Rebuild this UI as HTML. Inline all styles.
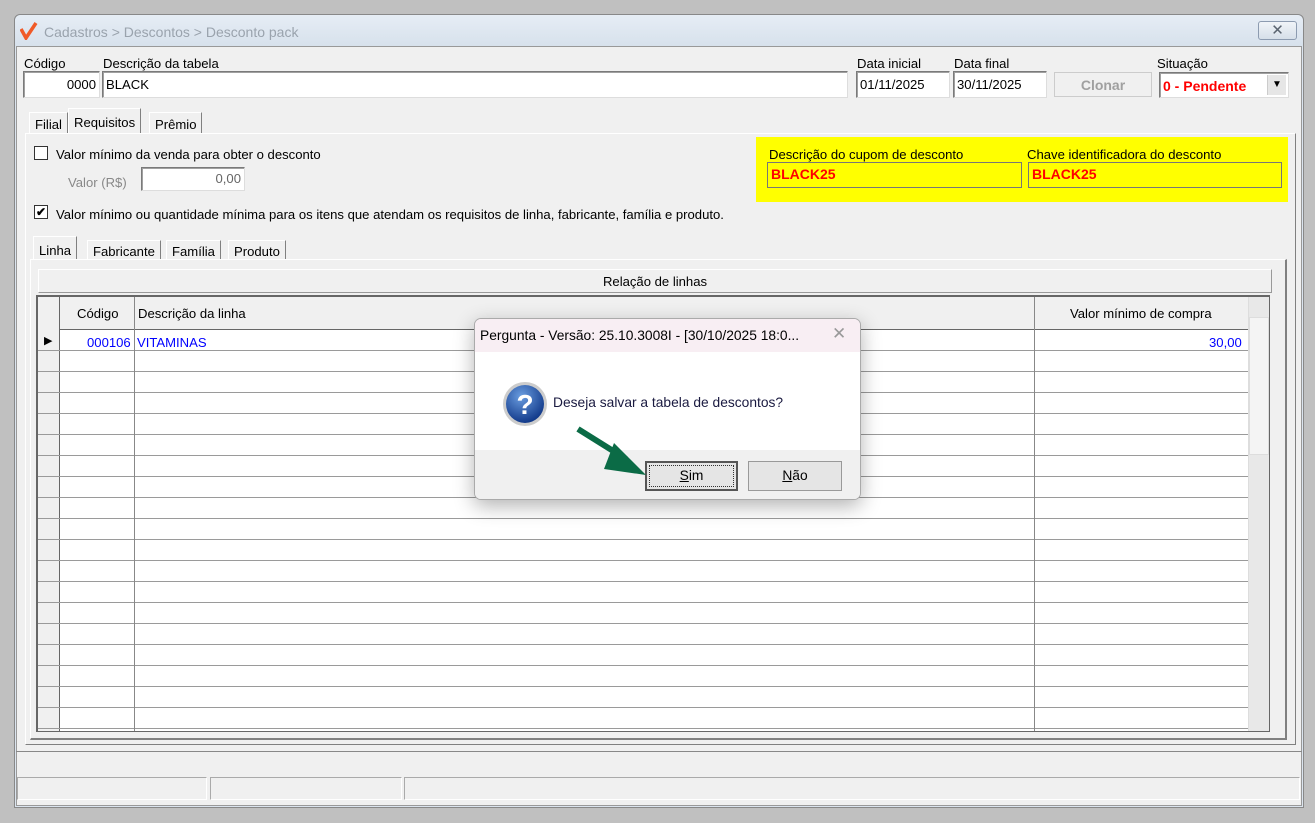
<!DOCTYPE html>
<html><head><meta charset="utf-8"><style>
*{box-sizing:border-box;margin:0;padding:0}
body{width:1315px;height:823px;background:#c0c0c0;position:relative;overflow:hidden;font-family:"Liberation Sans",sans-serif;font-size:13.1px;color:#000}
.a{position:absolute}
.inp{position:absolute;background:#fff;border:1px solid #7a7a7a;border-right-color:#ddd;border-bottom-color:#ddd;box-shadow:inset 1px 1px 0 #a0a0a0;padding:2px 3px;white-space:nowrap;overflow:hidden}
.tab{position:absolute;border:1px solid #fff;border-right:1px solid #808080;border-bottom:none;padding:4px 5px;background:#f0f0f0}
.btn{position:absolute;border:1px solid #adadad;background:#e1e1e1;text-align:center}
</style></head><body>
<div class="a" style="left:14px;top:14px;width:1290px;height:794px;background:#dbe4ee;border:1px solid #888;border-radius:6px 6px 0 0"></div>
<div class="a" style="left:15px;top:15px;width:1288px;height:31px;background:linear-gradient(#e6edf5,#d7e1ec);border-radius:6px 6px 0 0"></div>
<svg class="a" style="left:20px;top:22px" width="18" height="18" viewBox="0 0 18 18"><path d="M1 7 L6 16 L16 1" stroke="#f05a28" stroke-width="3.5" fill="none"/></svg>
<div class="a" style="left:44px;top:24px;font-size:14px;color:#9aa3ad">Cadastros &gt; Descontos &gt; Desconto pack</div>
<div class="a" style="left:1258px;top:21px;width:39px;height:19px;border:1px solid #8c9bb0;border-radius:3px;background:linear-gradient(#f0f4f8,#d6dfe9);text-align:center;font-size:15px;color:#5a6470;line-height:17px">✕</div>
<div class="a" style="left:16px;top:46px;width:1286px;height:760px;background:#f0f0f0;border:1px solid #999"></div>

<div class="a" style="left:24px;top:56px">Código</div>
<div class="a" style="left:103px;top:56px">Descrição da tabela</div>
<div class="inp" style="left:23px;top:71px;width:77px;height:27px;text-align:right;padding-top:5px">0000</div>
<div class="inp" style="left:102px;top:71px;width:746px;height:27px;padding-top:5px">BLACK</div>
<div class="a" style="left:857px;top:56px">Data inicial</div>
<div class="a" style="left:954px;top:56px">Data final</div>
<div class="inp" style="left:856px;top:71px;width:94px;height:27px;padding-top:5px">01/11/2025</div>
<div class="inp" style="left:953px;top:71px;width:94px;height:27px;padding-top:5px">30/11/2025</div>
<div class="btn" style="left:1054px;top:72px;width:98px;height:25px;color:#a0a0a0;background:#f0f0f0;border-color:#ccc;font-size:14px;line-height:25px;font-weight:bold">Clonar</div>
<div class="a" style="left:1157px;top:56px">Situação</div>
<div class="inp" style="left:1159px;top:72px;width:130px;height:26px;color:#f00;font-weight:bold;font-size:14px;padding-top:5px">0 - Pendente</div>
<div class="a" style="left:1267px;top:75px;width:19px;height:20px;background:#e6e6e6;border-left:1px solid #ccc;text-align:center;font-size:10px;line-height:20px">▼</div>

<div class="tab" style="left:29px;top:112px;height:22px">Filial</div>
<div class="tab" style="left:68px;top:108px;height:26px;padding-top:6px">Requisitos</div>
<div class="tab" style="left:149px;top:112px;height:22px">Prêmio</div>
<div class="a" style="left:25px;top:133px;width:1271px;height:612px;border:1px solid #fff;border-right-color:#808080;border-bottom-color:#808080"></div>

<div class="a" style="left:34px;top:146px;width:14px;height:14px;border:1px solid #333;background:#fff"></div>
<div class="a" style="left:56px;top:147px">Valor mínimo da venda para obter o desconto</div>
<div class="a" style="left:68px;top:175px;color:#888">Valor (R$)</div>
<div class="inp" style="left:141px;top:167px;width:104px;height:24px;text-align:right;color:#666;padding-top:3px">0,00</div>
<div class="a" style="left:34px;top:205px;width:14px;height:14px;border:1px solid #333;background:#fff;font-size:12px;line-height:12px;text-align:center;font-weight:bold">✔</div>
<div class="a" style="left:56px;top:207px">Valor mínimo ou quantidade mínima para os itens que atendam os requisitos de linha, fabricante, família e produto.</div>

<div class="a" style="left:756px;top:137px;width:532px;height:65px;background:#ffff00"></div>
<div class="a" style="left:769px;top:147px">Descrição do cupom de desconto</div>
<div class="a" style="left:1027px;top:147px">Chave identificadora do desconto</div>
<div class="a" style="left:767px;top:162px;width:255px;height:26px;border:1px solid #777;color:#f00;font-weight:bold;font-size:14px;padding:3px 3px">BLACK25</div>
<div class="a" style="left:1028px;top:162px;width:254px;height:26px;border:1px solid #777;color:#f00;font-weight:bold;font-size:14px;padding:3px 3px">BLACK25</div>

<div class="tab" style="left:33px;top:236px;height:24px;padding-top:6px">Linha</div>
<div class="tab" style="left:87px;top:240px;height:20px;padding-top:3px">Fabricante</div>
<div class="tab" style="left:166px;top:240px;height:20px;padding-top:3px">Família</div>
<div class="tab" style="left:228px;top:240px;height:20px;padding-top:3px">Produto</div>
<div class="a" style="left:30px;top:259px;width:1257px;height:481px;border:1px solid #fff;border-right:2px solid #808080;border-bottom:2px solid #808080"></div>
<div class="a" style="left:38px;top:269px;width:1234px;height:24px;border:1px solid #fff;border-right-color:#999;border-bottom-color:#999;text-align:center;line-height:24px">Relação de linhas</div>

<div class="a" style="left:36px;top:295px;width:1234px;height:437px;border:1px solid #666;border-top:2px solid #666;border-left:2px solid #666;background:#fff;overflow:hidden">
 <div class="a" style="left:0;top:0;width:1232px;height:33px;background:#f0f0f0;border-bottom:1px solid #666"></div>
 <div class="a" style="left:0;top:33px;width:1210px;height:400px;background:repeating-linear-gradient(#fff 0,#fff 20px,#9a9a9a 20px,#9a9a9a 21px)"></div>
 <div class="a" style="left:0;top:0;width:22px;height:440px;background:#f0f0f0;border-right:1px solid #666"></div>
 <div class="a" style="left:0;top:33px;width:22px;height:400px;background:repeating-linear-gradient(transparent 0,transparent 20px,#9a9a9a 20px,#9a9a9a 21px)"></div>
 <div class="a" style="left:96px;top:0;width:1px;height:440px;background:#888"></div>
 <div class="a" style="left:996px;top:0;width:1px;height:440px;background:#888"></div>
 <div class="a" style="left:39px;top:9px">Código</div>
 <div class="a" style="left:100px;top:9px">Descrição da linha</div>
 <div class="a" style="left:1032px;top:9px">Valor mínimo de compra</div>
 <div class="a" style="left:6px;top:37px;font-size:11px">▶</div>
 <div class="a" style="left:49px;top:38px;color:#00f">000106</div>
 <div class="a" style="left:99px;top:38px;color:#00f">VITAMINAS</div>
 <div class="a" style="left:1171px;top:38px;color:#00f">30,00</div>
 <div class="a" style="left:1210px;top:0;width:22px;height:440px;background:#e8e8e8;border-left:1px solid #ddd"></div>
 <div class="a" style="left:1211px;top:20px;width:20px;height:138px;background:#f4f4f4;border:1px solid #ddd"></div>
</div>

<div class="a" style="left:16px;top:751px;width:1286px;height:1px;background:#888"></div>
<div class="a" style="left:17px;top:777px;width:190px;height:23px;border:1px solid #aaa;border-right-color:#fff;border-bottom-color:#fff"></div>
<div class="a" style="left:210px;top:777px;width:192px;height:23px;border:1px solid #aaa;border-right-color:#fff;border-bottom-color:#fff"></div>
<div class="a" style="left:404px;top:777px;width:896px;height:23px;border:1px solid #aaa;border-right-color:#fff;border-bottom-color:#fff"></div>

<div class="a" style="left:474px;top:318px;width:387px;height:182px;background:#fff;border:1px solid #aaa;border-radius:7px;box-shadow:0 6px 20px rgba(0,0,0,.3);overflow:hidden">
 <div class="a" style="left:0;top:0;width:387px;height:33px;background:#f8eef3"></div>
 <div class="a" style="left:5px;top:9px;font-size:13.8px;white-space:nowrap">Pergunta - Versão: 25.10.3008I - [30/10/2025 18:0...</div>
 <div class="a" style="left:357px;top:5px;font-size:17px;color:#999">✕</div>
 <div class="a" style="left:0;top:131px;width:387px;height:51px;background:#f0f0f0"></div>
 <svg class="a" style="left:27px;top:62px" width="46" height="46" viewBox="0 0 46 46"><defs><radialGradient id="g" cx="40%" cy="30%" r="70%"><stop offset="0" stop-color="#6a9de0"/><stop offset="1" stop-color="#123a8a"/></radialGradient></defs><circle cx="23" cy="23" r="22" fill="#ccc"/><circle cx="23" cy="23" r="19" fill="url(#g)"/><text x="23" y="33" text-anchor="middle" font-family="Liberation Sans" font-weight="bold" font-size="28" fill="#fff">?</text></svg>
 <div class="a" style="left:78px;top:76px;font-size:13.8px;color:#1a1a40">Deseja salvar a tabela de descontos?</div>
 <div class="a" style="left:170px;top:142px;width:93px;height:30px;border:2px solid #555;background:#e5e5e5;text-align:center;line-height:26px;font-size:13.8px"><div style="position:absolute;left:2px;top:2px;right:2px;bottom:2px;border:1px dotted #333"></div><u>S</u>im</div>
 <div class="a" style="left:273px;top:142px;width:94px;height:30px;border:1px solid #999;background:#e5e5e5;text-align:center;line-height:28px;font-size:13.8px"><u>N</u>ão</div>
</div>
<svg class="a" style="left:574px;top:425px" width="80" height="60" viewBox="0 0 80 60"><path d="M4 4 L52 34" stroke="#0b6b46" stroke-width="6"/><path d="M40 18 L72 50 L30 44 Z" fill="#0b6b46"/></svg>
</body></html>
